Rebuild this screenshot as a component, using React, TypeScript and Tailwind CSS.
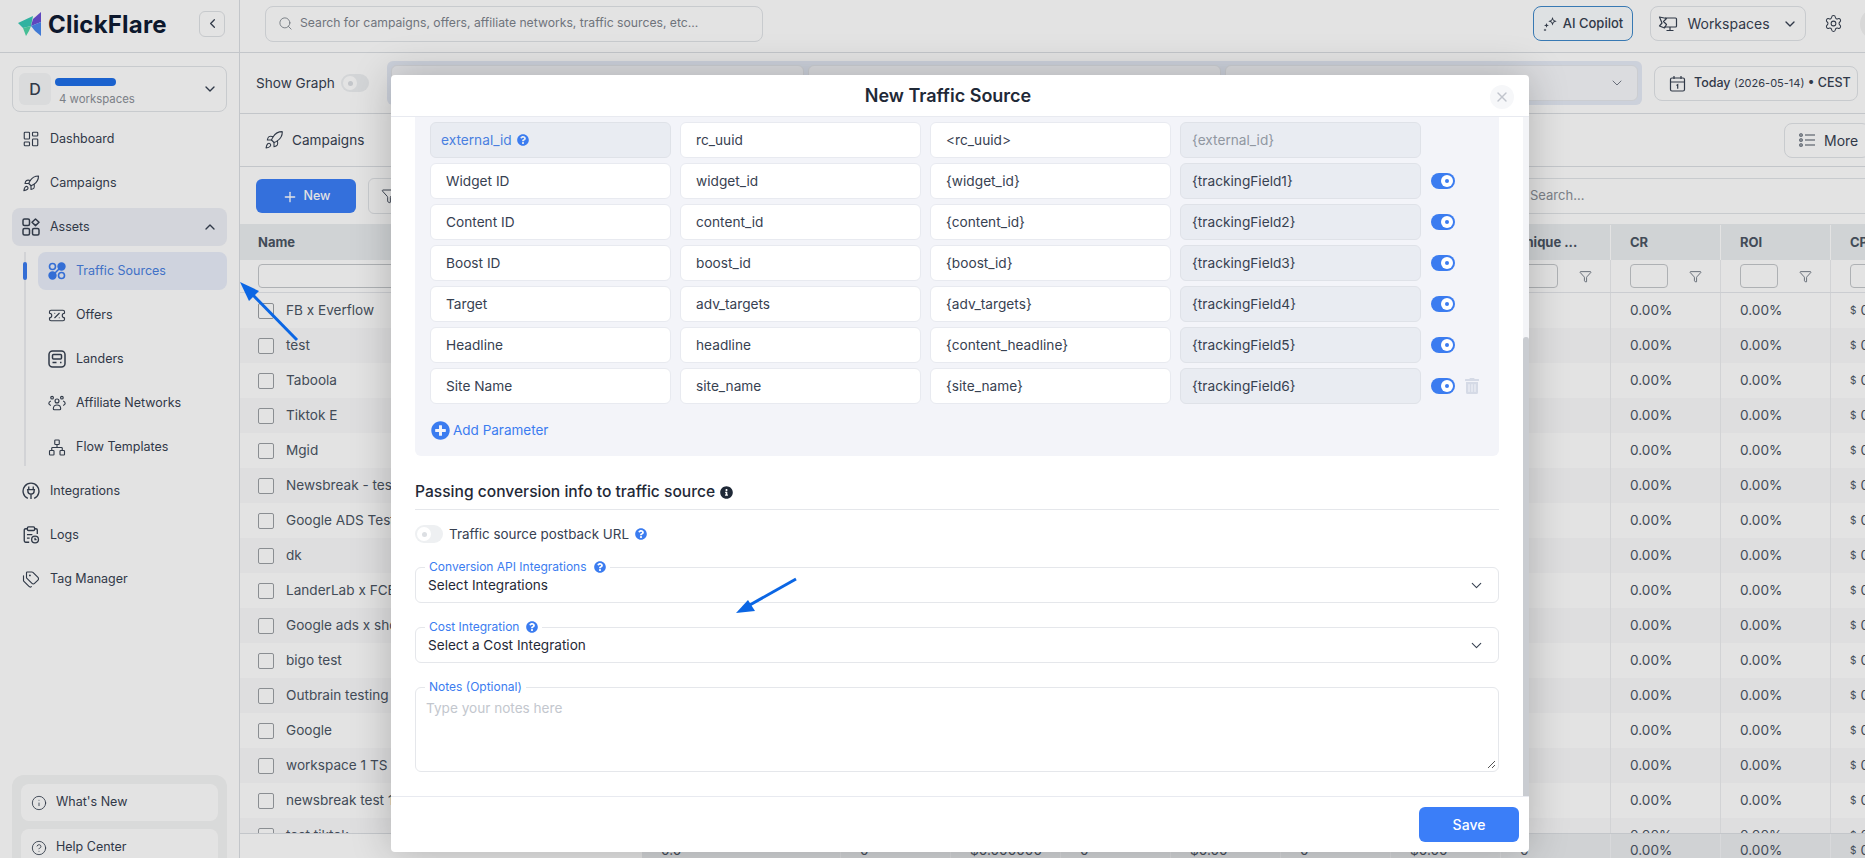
import { ChevronDown, ChevronLeft, ChevronUp, CircleHelp, Filter, Info, LayoutDashboard, Network, Plus, Rocket, Search, Settings, Tags, TicketPercent, X } from 'lucide-react';
import { FaInfoCircle, FaPlusCircle, FaQuestionCircle, FaTrashAlt } from 'react-icons/fa';

const names = ['FB x Everflow', 'test', 'Taboola', 'Tiktok E', 'Mgid', 'Newsbreak - test', 'Google ADS Test', 'dk', 'LanderLab x FCB', 'Google ads x shop', 'bigo test', 'Outbrain testing', 'Google', 'workspace 1 TS', 'newsbreak test 1', 'test tiktok'];

const params = [
    ['Widget ID', 'widget_id', '{widget_id}', '{trackingField1}'],
    ['Content ID', 'content_id', '{content_id}', '{trackingField2}'],
    ['Boost ID', 'boost_id', '{boost_id}', '{trackingField3}'],
    ['Target', 'adv_targets', '{adv_targets}', '{trackingField4}'],
    ['Headline', 'headline', '{content_headline}', '{trackingField5}'],
    ['Site Name', 'site_name', '{site_name}', '{trackingField6}'],
];

const gridCols = 'grid grid-cols-[402px_199px_repeat(10,110px)]';

function AssetsIcon() {
    return (
        <svg width="18" height="18" viewBox="0 0 18 18" fill="none" stroke="currentColor" strokeWidth="1.5">
            <rect x="1" y="1" width="6.5" height="6.5" rx="1.5" />
            <path d="M13.5 1l3.5 3.3-3.5 3.3L10 4.3z" strokeLinejoin="round" />
            <rect x="1" y="10.5" width="6.5" height="6.5" rx="1.5" />
            <rect x="10.5" y="10.5" width="6.5" height="6.5" rx="1.5" />
        </svg>
    );
}

function TrafficIcon() {
    return (
        <svg width="18" height="18" viewBox="0 0 18 18" fill="none" stroke="#3b7cf0" strokeWidth="1.6" className="shrink-0">
            <circle cx="4.5" cy="4.5" r="3" />
            <circle cx="13.5" cy="4.5" r="3.4" fill="#3b7cf0" />
            <circle cx="4.5" cy="13.5" r="3.4" fill="#3b7cf0" />
            <circle cx="13.5" cy="13.5" r="3" />
            <path d="M11 7L7 11" />
        </svg>
    );
}

function LandersIcon() {
    return (
        <svg width="18" height="18" viewBox="0 0 18 18" fill="none" stroke="currentColor" strokeWidth="1.5">
            <rect x="1" y="1" width="16" height="16" rx="3.5" />
            <rect x="4.5" y="4.5" width="9" height="4.5" rx="1" />
            <path d="M4.5 12.5h4M12 12.5h1.5" />
        </svg>
    );
}

function NetworksIcon() {
    return (
        <svg width="22" height="20" viewBox="0 0 22 18" fill="none" stroke="currentColor" strokeWidth="1.4">
            <circle cx="11" cy="6.5" r="2.4" />
            <path d="M6.5 16c0-3 2-4.500 4.500-4.500s4.500 1.500 4.500 4.500c0 .8-.6 1.300-1.300 1.300H7.800c-.7 0-1.300-.5-1.300-1.300z" />
            <circle cx="5" cy="2.500" r="1.600" />
            <circle cx="17" cy="2.500" r="1.600" />
            <path d="M3.500 6.500C1.800 7.200 1 8.500 1 9.500s1 1.800 2.500 2.500M18.500 6.500C20.200 7.200 21 8.500 21 9.500s-1 1.800-2.500 2.500" />
        </svg>
    );
}

function PlugIcon() {
    return (
        <svg width="20" height="20" viewBox="0 0 20 20" fill="none" stroke="currentColor" strokeWidth="1.5">
            <path d="M6.500 18.200A8.800 8.800 0 1 1 13.500 18.200" />
            <path d="M5.500 8.500h9M7.500 5v3.500M12.500 5v3.500M6.500 8.500v1.500a3.500 3.500 0 0 0 7 0V8.500M10 13.500V19" />
        </svg>
    );
}

function LogsIcon() {
    return (
        <svg width="20" height="20" viewBox="0 0 20 20" fill="none" stroke="currentColor" strokeWidth="1.5">
            <path d="M6 3H4a1.500 1.500 0 0 0-1.500 1.500v12A1.500 1.500 0 0 0 4 18h4M14 3h1.500A1.500 1.500 0 0 1 17 4.500V9" />
            <rect x="6" y="1" width="8" height="4" rx="1.200" />
            <path d="M5.500 9.500h6M5.500 13.500h3" />
            <circle cx="14.500" cy="15" r="3.800" />
            <path d="M14.500 13v2.200h1.700" />
        </svg>
    );
}

function Logo() {
    return (
        <svg width="24" height="25" viewBox="0 0 24 25" className="shrink-0">
            <path d="M0 11l15-7-2 10-8 2z" fill="#36c8b4" />
            <path d="M15 7l8-7v10l-10 4z" fill="#6a4fd6" />
            <path d="M13 14l10-4v14l-6-5z" fill="#4a8af0" />
            <path d="M5 16l8-2-2 5-3 5z" fill="#4fd6a8" />
        </svg>
    );
}

function CopilotIcon() {
    return (
        <svg width="15" height="15" viewBox="0 0 15 15" fill="#374151">
            <path d="M9.500 1l1.200 3 3 1.200-3 1.200-1.200 3-1.200-3-3-1.200 3-1.200zM9.500 3.400l-.6 1.200-1.200.6 1.200.6.6 1.200.6-1.200 1.200-.6-1.200-.6z" fillRule="evenodd" />
            <path d="M3.500 7l.7 1.700 1.700.7-1.700.7-.7 1.700-.7-1.700L1 9.400l1.800-.7zM2 12.500l.5 1 1 .5-1 .5-.5 1-.5-1-1-.5 1-.5z" />
        </svg>
    );
}

function WorkspacesIcon() {
    return (
        <svg width="20" height="18" viewBox="0 0 20 18" fill="none" stroke="#374151" strokeWidth="1.200">
            <path d="M7 3h10.500a1 1 0 0 1 1 1v7a1 1 0 0 1-1 1H6M12 12v3.500M8.500 15.500h7" />
            <path d="M1.500 2l7 1.500-3 3 3 3-2 3.500-5-2 2.500-3z" strokeLinejoin="round" />
        </svg>
    );
}

function DateIcon() {
    return (
        <svg width="17" height="17" viewBox="0 0 17 17" fill="none" stroke="#374151" strokeWidth="1.200" className="shrink-0">
            <rect x="1.500" y="3" width="14" height="13" rx="1.500" />
            <path d="M1.500 7h14M5 1v3M12 1v3M7.500 10.500l1.200-.8v4" />
        </svg>
    );
}

function MoreIcon() {
    return (
        <svg width="16" height="14" viewBox="0 0 16 14" fill="none" stroke="#4b5563" strokeWidth="1.100">
            <circle cx="2" cy="2" r="1.300" />
            <circle cx="2" cy="7" r="1.300" />
            <circle cx="2" cy="12" r="1.300" />
            <path d="M6 2h10M6 7h10M6 12h10" />
        </svg>
    );
}

function NavItem({ icon, label, active, right }: { icon: React.ReactNode; label: string; active?: boolean; right?: React.ReactNode }) {
    return (
        <div className={`relative flex h-[38px] items-center gap-[10px] rounded-lg pl-[10px] pr-[9px] text-[12.500px] ${active ? 'bg-[#eef0f6]' : ''} text-[#374151]`}>
            <span className="flex w-[18px] shrink-0 justify-center">{icon}</span>
            <span>{label}</span>
            {right && <span className="ml-auto">{right}</span>}
        </div>
    );
}

function Sidebar() {
    return (
        <aside className="flex h-full w-[240px] shrink-0 flex-col overflow-hidden border-r border-[#dcdfe3] bg-white">
            <div className="flex h-[53px] shrink-0 items-center border-b border-[#dcdfe3] pb-[3px] pl-[18px]">
                <Logo />
                <span className="ml-[6px] text-[24px] font-bold tracking-[0.2px] text-[#0f1b33]">ClickFlare</span>
                <button className="mb-[2px] ml-auto mr-[14px] flex h-[26px] w-[26px] items-center justify-center rounded-md border border-[#dfe2e6] text-[#374151]">
                    <ChevronLeft size={15} />
                </button>
            </div>

            <div className="mx-3 mt-[13px] flex h-[46px] shrink-0 items-center rounded-lg border border-[#e1e4e8] pl-[6px] pr-2">
                <div className="flex h-[32px] w-[32px] items-center justify-center rounded-md bg-[#f5f7f8] text-[16px] font-medium text-[#374151]">D</div>
                <div className="relative ml-[8px] flex h-full flex-1 flex-col justify-end pb-[3px] text-[11.400px] leading-[18px] text-[#8b9098]">
                    <span className="absolute left-[-4px] top-[11px] h-[8px] w-[61px] rounded-full bg-[#1f6fe8]" />
                    4 workspaces
                </div>
                <ChevronDown size={16} className="text-[#374151]" />
            </div>

            <nav className="mx-3 mt-2 flex flex-col gap-[6px]">
                <NavItem icon={<LayoutDashboard size={20} strokeWidth={1.5} />} label="Dashboard" />
                <NavItem icon={<Rocket size={21} strokeWidth={1.5} />} label="Campaigns" />
                <NavItem icon={<AssetsIcon />} label="Assets" active right={<ChevronUp size={16} />} />
                <div className="ml-3 flex flex-col gap-[6px] border-l-2 border-[#eceef1] pl-3">
                    <div className="relative flex h-[38px] items-center gap-[10px] rounded-lg bg-[#e9eefa] pl-[10px] text-[12.500px] text-[#4a7fe0]">
                        <span className="absolute left-[-15px] top-[10px] h-[18px] w-1 rounded-full bg-[#3b7cf0]" />
                        <TrafficIcon />
                        <span>Traffic Sources</span>
                    </div>
                    <NavItem icon={<TicketPercent size={21} strokeWidth={1.5} />} label="Offers" />
                    <NavItem icon={<LandersIcon />} label="Landers" />
                    <NavItem icon={<NetworksIcon />} label="Affiliate Networks" />
                    <NavItem icon={<Network size={21} strokeWidth={1.5} />} label="Flow Templates" />
                </div>
                <NavItem icon={<PlugIcon />} label="Integrations" />
                <NavItem icon={<LogsIcon />} label="Logs" />
                <NavItem icon={<Tags size={21} strokeWidth={1.5} />} label="Tag Manager" />
            </nav>

            <div className="mx-3 mt-auto flex h-[83px] shrink-0 flex-col gap-2 overflow-hidden rounded-t-xl bg-[#f4f5f5] p-[9px]">
                <div className="flex h-[37px] shrink-0 items-center gap-[9px] rounded-lg bg-white pl-[10px] text-[12.500px] text-[#374151]">
                    <Info size={16} strokeWidth={1.3} />
                    What's New
                </div>
                <div className="flex h-[37px] shrink-0 items-center gap-[9px] rounded-lg bg-white pl-[10px] text-[12.500px] text-[#374151]">
                    <CircleHelp size={16} strokeWidth={1.3} />
                    Help Center
                </div>
            </div>
        </aside>
    );
}

function TopBars() {
    return (
        <>
            <div className="flex h-[53px] shrink-0 items-center border-b border-[#dcdfe3] pb-[5px] pl-[25px]">
                <div className="flex h-[36px] w-[498px] items-center gap-[7px] rounded-lg border border-[#e1e4e8] pl-[12px] text-[12.200px] text-[#7d838c]">
                    <Search size={15} strokeWidth={1.4} />
                    Search for campaigns, offers, affiliate networks, traffic sources, etc...
                </div>
                <button className="ml-auto flex h-[35px] w-[100px] items-center justify-center gap-[5px] rounded-lg border border-[#3f88c9] bg-[#fafdff] text-[13px] font-medium text-[#374151]">
                    <CopilotIcon />
                    AI Copilot
                </button>
                <button className="ml-[17px] flex h-[35px] w-[156px] items-center justify-center gap-[9px] rounded-lg border border-[#e1e4e8] text-[14px] text-[#374151]">
                    <WorkspacesIcon />
                    Workspaces
                    <ChevronDown size={16} className="ml-[3px]" />
                </button>
                <Settings size={19} strokeWidth={1.3} className="ml-[18px] text-[#374151]" />
                <div className="-mr-[27px] ml-[17px] h-[32px] w-[32px] shrink-0 rounded-full bg-[#f3f3f3]" />
            </div>

            <div className="flex h-[61px] shrink-0 items-center border-b border-[#dcdfe3] pl-4">
                <span className="w-[79px] text-[13.600px] text-[#374151]">Show Graph</span>
                <span className="ml-[6px] flex h-[18px] w-[28px] items-center rounded-full bg-[#eef0f2] pl-[2px]">
                    <span className="flex h-[14px] w-[14px] items-center justify-center rounded-full bg-white">
                        <span className="h-[5px] w-[5px] rounded-full bg-[#dcdfe3]" />
                    </span>
                </span>
                <div className="ml-[18px] grid h-[44px] w-[1255px] grid-cols-3 gap-1 rounded-md bg-[#e6ebf6] p-1">
                    <div className="rounded-md border border-[#e5e7eb] bg-[#f6f8fb]" />
                    <div className="rounded-md border border-[#e5e7eb] bg-[#f6f8fb]" />
                    <div className="flex items-center justify-end rounded-md border border-[#e5e7eb] bg-[#f6f8fb] pr-3 text-[#6b7280]">
                        <ChevronDown size={16} strokeWidth={1.4} />
                    </div>
                </div>
                <button className="ml-3 flex h-[35px] w-[204px] items-center gap-2 rounded-lg border border-[#e1e4e8] pl-[14px] text-[12.500px] font-medium text-[#374151]">
                    <DateIcon />
                    <span className="whitespace-nowrap">Today <span className="text-[11px] font-normal">(2026-05-14)</span> • CEST</span>
                </button>
            </div>

            <div className="flex h-[53px] shrink-0 items-center border-b border-[#dcdfe3] pl-6">
                <Rocket size={20} strokeWidth={1.3} className="text-[#374151]" />
                <span className="ml-[8px] text-[13.600px] text-[#374151]">Campaigns</span>
                <button className="-mr-[5px] ml-auto flex h-[35px] w-[86px] items-center gap-[9px] rounded-lg border border-[#e1e4e8] pl-[14px] text-[14px] text-[#374151]">
                    <MoreIcon />
                    More
                </button>
            </div>

            <div className="flex h-[57px] shrink-0 items-center pl-4">
                <button className="flex h-[34px] w-[100px] items-center justify-center gap-[6px] rounded-md bg-[#3b7ef8] pt-[2px] text-[12.500px] font-medium text-white">
                    <Plus size={16} />
                    New
                </button>
                <button className="ml-3 flex h-[36px] w-[42px] items-center justify-center rounded-md border border-[#e1e4e8] text-[#374151]">
                    <Filter size={16} strokeWidth={1.4} />
                </button>
                <div className="ml-auto flex h-[36px] w-[350px] items-center border-y border-[#e1e4e8] pl-[15px] pt-[1px] text-[13px] text-[#8b9098]">Search...</div>
            </div>
        </>
    );
}

function ColumnFilter() {
    return (
        <div className="flex items-center border-r border-[#eceef0] pl-[19px]">
            <span className="h-[24px] w-[38px] rounded border border-[#c4c7cb] bg-white" />
            <Filter size={13} strokeWidth={1.4} className="ml-[21px] text-[#4b5563]" />
        </div>
    );
}

function DataTable() {
    return (
        <div className="min-h-0 flex-1 overflow-hidden">
            <div className={`${gridCols} h-[36px] items-stretch bg-[#eaedf0] pt-[1px] text-[13px] font-bold text-[#4b5563]`}>
                <div className="flex items-center pl-[18px]">Name</div>
                {Array.from({ length: 7 }).map((_, i) => <div key={i} />)}
                <div className="flex items-center border-r border-white pl-[15px]">Unique ...</div>
                <div className="flex items-center border-r border-white pl-[19px]">CR</div>
                <div className="flex items-center border-r border-white pl-[19px]">ROI</div>
                <div className="flex items-center pl-[19px]">CPA</div>
            </div>
            <div className={`${gridCols} h-[33px] border-b border-[#e5e7eb]`}>
                <div className="flex items-center pl-[18px]">
                    <span className="h-[24px] w-[300px] rounded border border-[#c4c7cb] bg-white" />
                </div>
                {Array.from({ length: 7 }).map((_, i) => <div key={i} />)}
                <ColumnFilter />
                <ColumnFilter />
                <ColumnFilter />
                <ColumnFilter />
            </div>
            {names.map((name, i) => (
                <div key={name} className={`${gridCols} h-[35px] text-[13.600px] text-[#4b5563] ${i % 2 ? 'bg-[#fafafb]' : 'bg-white'}`}>
                    <div className="flex items-center gap-3 pl-[18px]">
                        <span className="h-[16px] w-[16px] rounded-[2px] border-[1.500px] border-[#9ca0a5] bg-white" />
                        {name}
                    </div>
                    {Array.from({ length: 8 }).map((_, j) => <div key={j} className="border-r border-[#eceef0]" />)}
                    <div className="flex items-center border-r border-[#eceef0] pl-[19px]">0.00%</div>
                    <div className="flex items-center border-r border-[#eceef0] pl-[19px]">0.00%</div>
                    <div className="flex items-center pl-[19px]"><span className="mr-1 text-[10px]">$</span>0.00</div>
                </div>
            ))}
        </div>
    );
}

function TableFooter() {
    const cells = ['0.0', '0', '$0.000000', '0', '$0.00', '0', '$0.00', '0', '0.00%', '0.00%'];
    return (
        <div className={`${gridCols} h-[25px] shrink-0 border-t border-[#dcdfe3] text-[13.600px] text-[#4b5563]`}>
            <div />
            {cells.map((c, i) => (
                <div key={i} className="flex items-center border-r border-[#f3f4f6] bg-[#eaecef] pl-[19px] pt-[6px]">{c}</div>
            ))}
            <div className="flex items-center bg-[#eaecef] pl-[19px] pt-[6px]"><span className="mr-1 text-[10px]">$</span>0.00</div>
        </div>
    );
}

function Toggle() {
    return (
        <span className="flex h-[16px] w-[24px] shrink-0 items-center justify-end rounded-full bg-[#3b7cf0] pr-[2px]">
            <span className="flex h-[12px] w-[12px] items-center justify-center rounded-full bg-white">
                <span className="h-[4px] w-[4px] rounded-full bg-[#3b7cf0]" />
            </span>
        </span>
    );
}

function Cell({ children, muted }: { children: React.ReactNode; muted?: boolean }) {
    return (
        <div className={`flex h-[36px] w-[241px] shrink-0 items-center rounded-md border text-[13.700px] ${muted ? 'border-[#dfe2e8] bg-[#e9ecf2] pl-[10px] text-[#374151]' : 'border-[#e8eaf0] bg-white pl-[15px] text-[#374151]'}`}>
            {children}
        </div>
    );
}

function Field({ label, value }: { label: string; value: string }) {
    return (
        <div className="relative flex h-[36px] items-center rounded-md border border-[#e5e7eb] pl-[12px] text-[13.600px] text-[#1f2937]">
            <span className="absolute -top-[9px] left-[9px] flex items-center gap-[7px] bg-white px-[4px] text-[12px] leading-[16px] text-[#3b7cf0]">
                {label}
                <FaQuestionCircle size={12} />
            </span>
            {value}
            <ChevronDown size={17} strokeWidth={1.5} className="ml-auto mr-[13px] text-[#374151]" />
        </div>
    );
}

function Modal() {
    return (
        <div className="absolute left-[391px] top-[75px] flex h-[777px] w-[1138px] flex-col overflow-hidden rounded bg-white shadow-[0_0_40px_rgba(0,0,0,0.22)]">
            <div className="relative flex h-[42px] shrink-0 items-center justify-center border-b border-[#e8eaf0] pr-[24px]">
                <h2 className="text-[18px] font-semibold text-[#1f2937]">New Traffic Source</h2>
                <span className="absolute right-[15px] top-[10px] flex h-[24px] w-[24px] items-center justify-center rounded-full bg-[#f6f7f9] text-[#c0c4cc]">
                    <X size={16} />
                </span>
            </div>

            <div className="flex min-h-0 flex-1">
                <div className="flex-1 pl-6 pr-[24px]">
                    <div className="rounded-b-md bg-[#f3f4f9] px-[15px] pb-4 pt-[5px]">
                        <div className="flex flex-col gap-[5px]">
                            <div className="flex gap-[9px]">
                                <Cell muted>
                                    <span className="text-[#4a7fe0]">external_id</span>
                                    <FaQuestionCircle size={12} className="ml-[5px] text-[#3b7cf0]" />
                                </Cell>
                                <Cell>rc_uuid</Cell>
                                <Cell>{'<rc_uuid>'}</Cell>
                                <Cell muted><span className="ml-[1px] text-[#9097a1]">{'{external_id}'}</span></Cell>
                            </div>
                            {params.map((row, i) => (
                                <div key={row[0]} className="flex items-center gap-[9px]">
                                    <Cell>{row[0]}</Cell>
                                    <Cell>{row[1]}</Cell>
                                    <Cell>{row[2]}</Cell>
                                    <Cell muted><span className="ml-[1px]">{row[3]}</span></Cell>
                                    <span className="ml-[1px]"><Toggle /></span>
                                    {i === params.length - 1 && <FaTrashAlt size={16} className="text-[#d5dae6]" />}
                                </div>
                            ))}
                        </div>
                        <div className="mt-4 flex h-[20px] items-center gap-[3px] text-[13.500px] text-[#3b7cf0]">
                            <FaPlusCircle size={19} className="ml-[1px]" />
                            Add Parameter
                        </div>
                    </div>

                    <div className="mt-6 flex items-center gap-[5px] border-b border-[#e5e7eb] pb-[5px] text-[15.600px] font-medium leading-6 text-[#1f2937]">
                        Passing conversion info to traffic source
                        <FaInfoCircle size={13} />
                    </div>

                    <div className="mt-[15px] flex h-[18px] items-center text-[13.400px] text-[#374151]">
                        <span className="flex h-[18px] w-[28px] items-center rounded-full bg-[#eef0f2] pl-[2px]">
                            <span className="flex h-[14px] w-[14px] items-center justify-center rounded-full bg-white">
                                <span className="h-[5px] w-[5px] rounded-full bg-[#dcdfe3]" />
                            </span>
                        </span>
                        <span className="ml-[6px]">Traffic source postback URL</span>
                        <FaQuestionCircle size={12} className="ml-[6px] text-[#3b7cf0]" />
                    </div>

                    <div className="mt-6 flex flex-col gap-6">
                        <Field label="Conversion API Integrations" value="Select Integrations" />
                        <Field label="Cost Integration" value="Select a Cost Integration" />
                        <div className="relative h-[85px] rounded-md border border-[#e5e7eb] pl-[10px] pt-[10px] text-[13.600px] text-[#c3c7ce]">
                            <span className="absolute -top-[9px] left-[9px] bg-white px-[4px] text-[12px] leading-[16px] text-[#3b7cf0]">Notes (Optional)</span>
                            Type your notes here
                            <svg width="9" height="9" viewBox="0 0 9 9" className="absolute bottom-[2px] right-[2px]" stroke="#555" strokeWidth="1">
                                <path d="M1 8l7-7M5 8l3-3" />
                            </svg>
                        </div>
                    </div>
                </div>
                <div className="w-[6px] shrink-0 bg-[#f3f4f7] pt-[220px]">
                    <div className="h-full rounded-t-sm bg-[#c9ccd1]" />
                </div>
            </div>

            <div className="flex h-[56px] shrink-0 items-center justify-end border-t border-[#e8eaf0] pr-[10px]">
                <button className="h-[35px] w-[100px] rounded-md bg-[#3b7ef8] text-[14px] font-medium text-white">Save</button>
            </div>
        </div>
    );
}

export default function App() {
    return (
        <div className="relative flex h-[858px] w-[1865px] overflow-hidden bg-white [font-family:Inter,sans-serif]">
            <Sidebar />
            <main className="flex h-full min-w-0 flex-1 flex-col overflow-hidden">
                <TopBars />
                <DataTable />
                <TableFooter />
            </main>

            <div className="absolute inset-0 bg-black/[0.11]" />
            <Modal />

            {/* annotation arrows drawn on the screenshot */}
            <svg width="1865" height="858" className="pointer-events-none absolute inset-0" fill="#0b66e4" stroke="#0b66e4">
                <path d="M297 340L249 291" strokeWidth="3" />
                <path d="M240 282l19 9-10 10z" stroke="none" />
                <path d="M796 579L748 606" strokeWidth="3" />
                <path d="M736 613l12-13 7 11z" stroke="none" />
            </svg>
        </div>
    );
}
